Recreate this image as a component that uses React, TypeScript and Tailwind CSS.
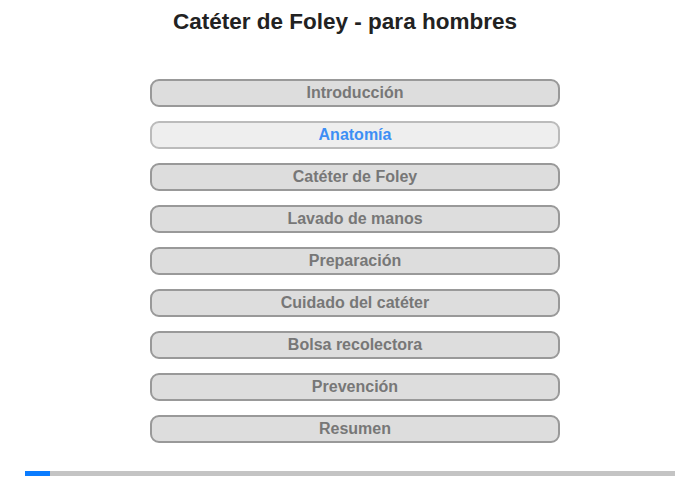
import React, { useState } from 'react';

const SECTIONS = [
  'Introducción',
  'Anatomía',
  'Catéter de Foley',
  'Lavado de manos',
  'Preparación',
  'Cuidado del catéter',
  'Bolsa recolectora',
  'Prevención',
  'Resumen',
];

const App: React.FC = () => {
  const [active, setActive] = useState(1);

  return (
    <div className="w-[700px] h-[480px] bg-white font-['Liberation_Sans',Arial,sans-serif] flex flex-col">
      {/* Title */}
      <div className="pt-[9px] pr-[10px] flex justify-center">
        <h1 className="text-[22.5px] leading-[26px] font-bold text-[#222]">Catéter de Foley - para hombres</h1>
      </div>

      {/* Section menu */}
      <div className="mt-[44px] ml-[150px] w-[410px] flex flex-col gap-[14px]">
        {SECTIONS.map((s, i) => (
          <button
            key={s}
            onClick={() => setActive(i)}
            className={`h-[28px] rounded-[9px] border-2 text-[16px] leading-[24px] font-bold text-center ${
              i === active
                ? 'bg-[#eeeeee] border-[#bbbbbb] text-[#3d8ff5]'
                : 'bg-[#dddddd] border-[#999999] text-[#777777]'
            }`}
          >
            {s}
          </button>
        ))}
      </div>

      {/* Progress */}
      <div className="mt-auto mb-[4px] mx-[25px] h-[5px] bg-[#c4c4c4] flex">
        <div className="w-[25px] bg-[#0a7cff]" />
      </div>
    </div>
  );
};

export default App;
